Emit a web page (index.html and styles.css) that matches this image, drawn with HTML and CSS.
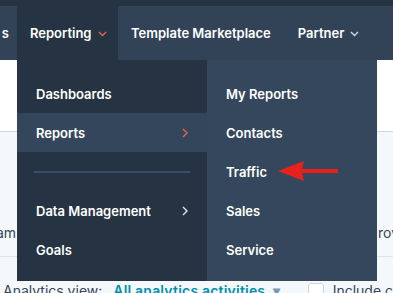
FILE: index.html
```html
<!DOCTYPE html>
<html>
<head>
<meta charset="utf-8">
<link rel="stylesheet" href="styles.css">
</head>
<body>
<header class="topnav">
  <div class="nav-item nav-light nav-first">s</div>
  <div class="nav-item nav-active">Reporting
    <svg class="chev" width="9" height="6" viewBox="0 0 9 6"><path d="M1 1l3.5 3.5L8 1" fill="none" stroke="#e2654e" stroke-width="1.4"/></svg>
  </div>
  <div class="nav-rest nav-light">
    <div class="nav-item">Template Marketplace</div>
    <div class="nav-item">Partner
      <svg class="chev" width="9" height="6" viewBox="0 0 9 6"><path d="M1 1l3.5 3.5L8 1" fill="none" stroke="#cbd6e2" stroke-width="1.4"/></svg>
    </div>
  </div>
</header>

<main class="page">
  <div class="band"></div>
  <div class="content">
    <div class="content-row"><span class="frag-left">am</span><span class="frag-right">rov</span></div>
  </div>
  <div class="filters">
    <span class="label">Analytics view:</span>
    <span class="link">All analytics activities <span class="caret">▾</span></span>
    <span class="checkbox"></span>
    <span class="label">Include c</span>
  </div>
</main>

<div class="dropdown">
  <ul class="menu menu-main">
    <li class="menu-row">Dashboards</li>
    <li class="menu-row is-active">Reports
      <svg class="arrow-r" width="6" height="10" viewBox="0 0 6 10"><path d="M1 1l4 4-4 4" fill="none" stroke="#e2654e" stroke-width="1.4"/></svg>
    </li>
    <li class="menu-divider"><span></span></li>
    <li class="menu-row">Data Management
      <svg class="arrow-r" width="6" height="10" viewBox="0 0 6 10"><path d="M1 1l4 4-4 4" fill="none" stroke="#dfe3eb" stroke-width="1.4"/></svg>
    </li>
    <li class="menu-row">Goals</li>
  </ul>
  <ul class="menu menu-sub">
    <li class="menu-row">My Reports</li>
    <li class="menu-row">Contacts</li>
    <li class="menu-row">Traffic
      <svg class="red-arrow" width="60" height="22" viewBox="0 0 60 22"><polygon points="0,11 26,1 24,9 60,9 60,13 24,13 26,21" fill="#e8211d"/></svg>
    </li>
    <li class="menu-row">Sales</li>
    <li class="menu-row">Service</li>
  </ul>
</div>
</body>
</html>
```

FILE: styles.css
```css
* { box-sizing: border-box; }
html, body { margin: 0; padding: 0; }
body {
  width: 393px;
  height: 293px;
  overflow: hidden;
  background: #f5f8fa;
  font-family: "Inter", "Noto Sans", sans-serif;
  position: relative;
}
.topnav {
  display: flex;
  height: 60px;
  background: #253342;
  color: #ffffff;
  font-size: 13px;
  font-weight: 600;
}
.nav-item {
  display: flex;
  align-items: center;
  gap: 6px;
  white-space: nowrap;
}
.nav-light {
  background: #324357;
  margin-top: 6px;
}
.nav-first {
  width: 17px;
  justify-content: flex-end;
  padding-right: 8px;
  overflow: hidden;
}
.nav-active {
  width: 101px;
  padding-left: 13px;
  padding-top: 6px;
}
.chev { margin-top: 2px; }
.nav-rest {
  flex: 1;
  display: flex;
  padding-left: 13px;
  gap: 27px;
}
.page { display: flex; flex-direction: column; }
.band {
  height: 72px;
  background: #ffffff;
  border-bottom: 1px solid #cbd6e2;
}
.content {
  height: 125px;
  border-bottom: 1px solid #dfe3eb;
  color: #33475b;
  font-size: 14px;
}
.content-row {
  display: flex;
  justify-content: space-between;
  padding-top: 92px;
  margin-left: -4px;
  margin-right: -6px;
  line-height: 18px;
}
.filters {
  display: flex;
  align-items: center;
  padding-left: 3px;
  padding-top: 25px;
  font-size: 14px;
  line-height: 18px;
  color: #33475b;
  white-space: nowrap;
}
.filters .link {
  color: #0091ae;
  font-weight: 600;
  margin-left: 11px;
  letter-spacing: 0.2px;
}
.caret { color: #7c98b6; margin-left: 4px; }
.checkbox {
  width: 16px;
  height: 16px;
  border: 1px solid #cbd6e2;
  border-radius: 3px;
  background: #fff;
  margin-left: 28px;
  margin-right: 9px;
}

.dropdown {
  position: absolute;
  top: 60px;
  left: 17px;
  display: flex;
}
.menu {
  list-style: none;
  margin: 0;
  padding: 14px 0 12px;
  height: 221px;
  color: #ffffff;
  font-size: 13px;
  font-weight: 600;
}
.menu-main { width: 190px; background: #253342; }
.menu-sub { width: 170px; background: #35475c; }
.menu-row {
  position: relative;
  height: 39px;
  display: flex;
  align-items: center;
  justify-content: space-between;
  padding: 0 19px 0 19px;
}
.menu-sub .menu-row { justify-content: flex-start; }
.menu-row.is-active { background: #34465b; }
.menu-divider {
  height: 39px;
  display: flex;
  align-items: center;
  padding: 0 17px;
}
.menu-divider span {
  display: block;
  width: 100%;
  height: 2px;
  background: #3a4e66;
}
.red-arrow {
  position: absolute;
  left: 71px;
  top: 8px;
}
```
